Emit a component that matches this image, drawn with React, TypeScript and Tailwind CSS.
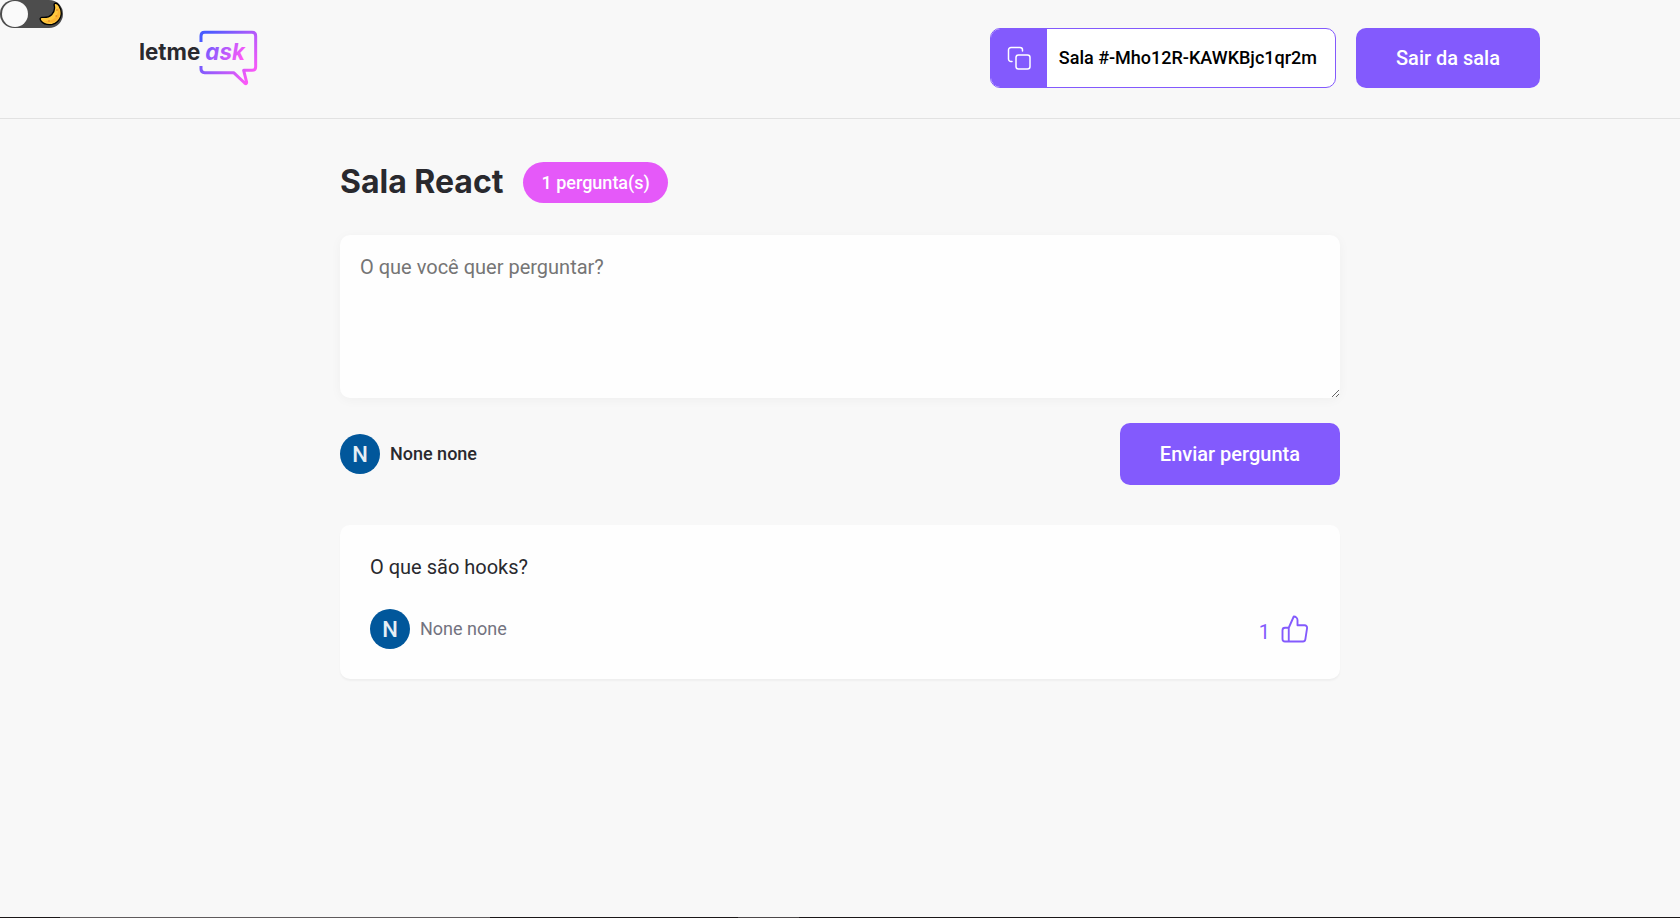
import React from "react";

function Logo() {
  return (
    <svg viewBox="0 0 357 171" className="h-[57px] w-[119px]" role="img" aria-label="letmeask">
      <defs>
        <linearGradient id="logoStroke" gradientUnits="userSpaceOnUse" x1="182" y1="30" x2="330" y2="150">
          <stop offset="0" stopColor="#485bff" />
          <stop offset="1" stopColor="#ff59f8" />
        </linearGradient>
        <linearGradient id="logoText" gradientUnits="userSpaceOnUse" x1="200" y1="40" x2="300" y2="100">
          <stop offset="0" stopColor="#6f5bff" />
          <stop offset="1" stopColor="#ff59f8" />
        </linearGradient>
      </defs>
      <path
        d="M183 36V18Q183 7 194 7H336Q347 7 347 18V110Q347 121 336 121H311L320 157Q320 164 314 159L281 128H194Q183 128 183 117V108"
        fill="none"
        stroke="url(#logoStroke)"
        strokeWidth="9"
        strokeLinejoin="round"
      />
      <text x="-3" y="90" fontFamily="Inter, sans-serif" fontWeight="700" fontSize="67" fill="#29292e">
        letme
      </text>
      <text x="196" y="90" fontFamily="Inter, sans-serif" fontWeight="700" fontStyle="italic" fontSize="67" fill="url(#logoText)">
        ask
      </text>
    </svg>
  );
}

function Moon() {
  return (
    <svg viewBox="0 0 72 72" className="h-6 w-6" aria-hidden="true">
      <path
        d="M48 4Q56 2 61 13Q70 28 65 44Q58 62 40 67Q18 71 6 57Q0 48 8 46Q28 48 38 38Q49 27 46 12Q44 6 48 4Z"
        fill="#ffc83d"
        stroke="#000"
        strokeWidth="4"
        strokeLinejoin="round"
      />
      <path d="M12 56Q34 60 47 48Q60 36 57 16Q68 34 58 50Q42 70 12 56Z" fill="#f9a72b" opacity="0.6" />
      <circle cx="54" cy="24" r="3" fill="#e8912d" />
      <circle cx="30" cy="57" r="3" fill="#e8912d" />
      <circle cx="52" cy="42" r="3" fill="#e8912d" />
    </svg>
  );
}

function ThemeSwitch() {
  return (
    <label className="absolute top-0 left-0 flex h-7 w-[63px] items-center justify-between rounded-full bg-[#4d4d4d] pl-0.5">
      <input type="checkbox" aria-label="Tema escuro" className="size-[26px] appearance-none rounded-full bg-[#fafafa]" />
      <Moon />
    </label>
  );
}

function Avatar() {
  return (
    <span className="flex size-10 items-center justify-center rounded-full bg-[#01579b] text-[22px] font-medium text-white/90" aria-hidden="true">
      N
    </span>
  );
}

function CopyIcon() {
  return (
    <svg viewBox="0 0 24 24" className="size-6" fill="none" stroke="#fff" strokeWidth="1.500" strokeLinecap="round" strokeLinejoin="round" aria-hidden="true">
      <rect x="9" y="9" width="14" height="14" rx="2.500" />
      <path d="M5 15.500H4A2.500 2.500 0 0 1 1.500 13V4A2.500 2.500 0 0 1 4 1.500H13A2.500 2.500 0 0 1 15.500 4V5" />
    </svg>
  );
}

function LikeIcon() {
  return (
    <svg viewBox="0 0 24 24" className="size-[30px]" fill="none" stroke="#835afd" strokeWidth="1.500" strokeLinecap="round" strokeLinejoin="round" aria-hidden="true">
      <path d="M7 22H4a2 2 0 0 1-2-2v-7a2 2 0 0 1 2-2h3m7-2V5a3 3 0 0 0-3-3l-4 9v11h11.280a2 2 0 0 0 2-1.700l1.380-9a2 2 0 0 0-2-2.300H14z" />
    </svg>
  );
}

export default function App() {
  return (
    <div className="flex min-h-screen flex-col bg-[#f8f8f8] font-['Roboto',sans-serif] text-[#29292e]">
      <ThemeSwitch />
      <header className="border-b border-[#e2e2e2] px-10 pt-7 pb-[30px]">
        <div className="mx-auto flex max-w-[1400px] items-center justify-between">
          <a href="#">
            <Logo />
          </a>
          <div className="flex gap-5">
            <button className="flex h-[60px] cursor-pointer overflow-hidden rounded-[10px] border border-[#835afd] bg-white text-black">
              <span className="flex h-full items-center bg-[#835afd] px-4">
                <CopyIcon />
              </span>
              <span className="self-center pr-[18px] pl-3 text-lg font-medium">Sala #-Mho12R-KAWKBjc1qr2m</span>
            </button>
            <button className="h-[60px] cursor-pointer rounded-[10px] bg-[#835afd] px-10 text-xl font-medium text-white">
              Sair da sala
            </button>
          </div>
        </div>
      </header>

      <main className="mx-auto w-full max-w-[1000px] flex-1 pt-10">
        <div className="flex items-start gap-5 pt-[3px]">
          <h1 className="font-['Inter',sans-serif] text-[32px] leading-10 font-bold">Sala React</h1>
          <span className="rounded-full bg-[#e559f9] px-[18px] py-2 text-lg leading-[25px] font-medium text-white">1 pergunta(s)</span>
        </div>

        <form className="mt-8">
          <textarea
            aria-label="Pergunta"
            placeholder="O que você quer perguntar?"
            className="block min-h-[163px] w-full resize-y rounded-[10px] bg-[#fefefe] p-5 text-xl leading-6 shadow-[0_2px_12px_rgba(0,0,0,0.04)] placeholder:text-[#757575]"
          />
          <div className="mt-[25px] flex items-center justify-between">
            <div className="flex items-center gap-2.5">
              <Avatar />
              <span className="text-lg font-medium">None none</span>
            </div>
            <button type="submit" className="h-[62px] cursor-pointer rounded-[10px] bg-[#835afd] px-10 text-xl font-medium text-white">
              Enviar pergunta
            </button>
          </div>
        </form>

        <article className="mt-10 rounded-[10px] bg-[#fefefe] p-[30px] shadow-[0_2px_2px_rgba(0,0,0,0.04)]">
          <p className="text-xl leading-6">O que são hooks?</p>
          <footer className="mt-[30px] flex items-center justify-between">
            <div className="flex items-center gap-2.5">
              <Avatar />
              <span className="text-lg text-[#737380]">None none</span>
            </div>
            <button aria-label="Marcar como gostei" className="flex cursor-pointer items-end gap-2.5 text-xl leading-6 text-[#835afd]">
              <span>1</span>
              <LikeIcon />
            </button>
          </footer>
        </article>
      </main>

      <div className="flex h-px bg-[#1b1718]" aria-hidden="true">
        <span className="ml-[60px] w-[430px] bg-[#5f5b5c]" />
        <span className="ml-[248px] w-[61px] bg-[#4c4849]" />
      </div>
    </div>
  );
}
